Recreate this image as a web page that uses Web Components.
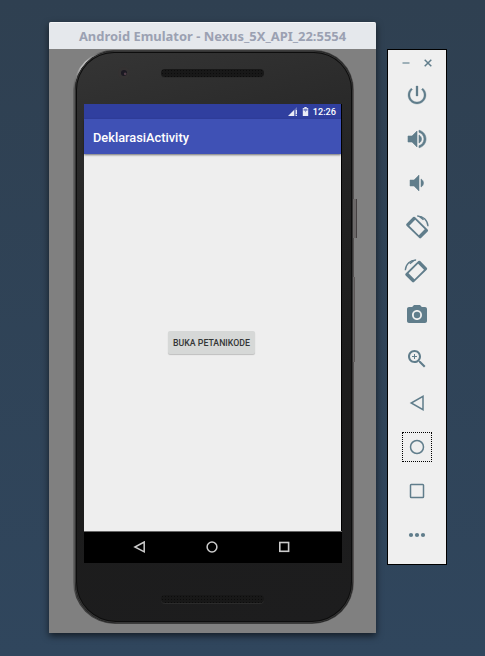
<!DOCTYPE html>
<html lang="id"><head><meta charset="utf-8"><title>Android Emulator</title>
<style>
html,body{margin:0;height:100%}
body{width:485px;height:656px;overflow:hidden;background:linear-gradient(#2f4051,#30465d);display:flex;align-items:flex-start;gap:11px;padding:22px 0 0 49px;box-sizing:border-box}
tool-panel{margin-top:27px}
</style></head><body>
<emulator-window heading="Android Emulator - Nexus_5X_API_22:5554">
  <phone-frame>
    <android-screen heading="DeklarasiActivity" time="12:26"><android-button>BUKA PETANIKODE</android-button></android-screen>
  </phone-frame>
</emulator-window>
<tool-panel></tool-panel>
<script>
const define=(name,markup,setup)=>customElements.define(name,class extends HTMLElement{
  connectedCallback(){
    if(this.shadowRoot)return;
    const t=document.createElement('template');t.innerHTML=markup;
    this.attachShadow({mode:'open'}).append(t.content.cloneNode(true));
    if(setup)setup(this,this.shadowRoot);
  }});

const fill=(d,w=0)=>`<path d="${d}" stroke="currentColor" stroke-width="${w}"/>`;
const rotate=`<g transform="translate(12.1 12.6) rotate(44.5)"><path fill-rule="evenodd" d="M-8.9-6H8.9Q10.2-6 10.2-4.7V4.7Q10.2 6 8.9 6H-8.9Q-10.2 6-10.2 4.7V-4.7Q-10.2-6-8.9-6ZM-6.8-4.2V4.2H6.6V-4.2Z"/></g><path d="M12.2 1.1C18 .7 22.6 5.2 23 11.2" fill="none" stroke="currentColor" stroke-width="1.3"/><path d="M12 .6L16 1.2L19 4.6L18 5.2Z"/>`;
const ICONS={
 power:fill('M13 3h-2v10h2V3zm4.83 2.17l-1.42 1.42C17.99 7.86 19 9.81 19 12c0 3.87-3.13 7-7 7s-7-3.13-7-7c0-2.19 1.01-4.14 2.58-5.42L6.17 5.17C4.23 6.82 3 9.26 3 12c0 4.97 4.03 9 9 9s9-4.03 9-9c0-2.74-1.23-5.18-3.17-6.83z',.3),
 louder:fill('M3 9v6h4l5 5V4L7 9H3zm13.5 3c0-1.77-1.02-3.29-2.5-4.03v8.05c1.48-.73 2.5-2.25 2.5-4.02zM14 3.23v2.06c2.89.86 5 3.54 5 6.71s-2.11 5.85-5 6.71v2.06c4.01-.91 7-4.49 7-8.77s-2.99-7.86-7-8.77z',.6),
 quieter:fill('M18.5 12c0-1.77-1.02-3.29-2.5-4.03v8.05c1.48-.73 2.5-2.25 2.5-4.02zM5 9v6h4l5 5V4L9 9H5z',.5),
 rotateLeft:rotate,
 rotateRight:`<g transform="matrix(-1 0 0 1 23.3 0)">${rotate}</g>`,
 camera:'<circle cx="12" cy="12" r="3.2"/>'+fill('M9 2L7.17 4H4c-1.1 0-2 .9-2 2v12c0 1.1.9 2 2 2h16c1.1 0 2-.9 2-2V6c0-1.1-.9-2-2-2h-3.17L15 2H9zm3 15c-2.76 0-5-2.24-5-5s2.24-5 5-5 5 2.24 5 5-2.24 5-5 5z'),
 zoom:fill('M15.5 14h-.79l-.28-.27C15.41 12.59 16 11.11 16 9.5 16 5.91 13.09 3 9.5 3S3 5.91 3 9.5 5.91 16 9.5 16c1.61 0 3.09-.59 4.23-1.57l.27.28v.79l5 4.99L20.49 19l-4.99-5zm-6 0C7.01 14 5 11.99 5 9.5S7.01 5 9.5 5 14 7.01 14 9.5 11.99 14 9.5 14z')+'<path d="M12 10h-2v2H9v-2H7V9h2V7h1v2h2v1z"/>',
 back:'<path d="M18 5.4V18.6L6.2 12Z" fill="none" stroke="currentColor" stroke-width="1.5"/>',
 home:'<circle cx="12" cy="12" r="6.5" fill="none" stroke="currentColor" stroke-width="1.5"/>',
 recent:'<rect x="5.5" y="5.5" width="13" height="13" rx=".8" fill="none" stroke="currentColor" stroke-width="1.5"/>',
 more:'<circle cx="6" cy="12" r="2.1"/><circle cx="12" cy="12" r="2.1"/><circle cx="18" cy="12" r="2.1"/>'
};

define('speaker-grille',`<style>:host{display:block;width:103px;height:8px;border-radius:4px;background:radial-gradient(circle,#0c0c0c .8px,transparent 1px) 0 0/3px 3px,#181818;box-shadow:0 1px 0 #2b2b2b}</style>`);

define('android-button',`<style>:host{display:flex;align-items:center;justify-content:center;width:87px;height:23px;padding-top:1px;box-sizing:border-box;border-radius:2px;background:#d6d8d7;box-shadow:0 1px 1px #0003;color:#343636;font:500 8.75px Roboto,sans-serif;white-space:nowrap}</style><slot></slot>`);

define('android-screen',`<style>
:host{display:flex;flex-direction:column;width:257px;height:459px;background:#eee;font-family:Roboto,sans-serif;border-right:1px solid #000}
.status{height:15px;background:#303f9f;color:#fff;display:flex;align-items:center;justify-content:flex-end;gap:4px;padding-right:5px;font:500 9.2px Roboto,sans-serif}
.bar{height:35px;box-sizing:border-box;background:#3f51b5;color:#fff;display:flex;align-items:center;padding:1px 0 0 9px;font:500 12.8px Roboto,sans-serif;box-shadow:0 1px 2px #0008}
main{flex:1;display:flex;align-items:center;justify-content:center;padding:0 2px 0 0}
nav{height:32px;background:#000;display:flex;align-items:center;justify-content:space-between;padding:0 51px 0 49px;margin-right:-1px;color:#ccc;border-top:1px solid #666;box-sizing:border-box}
svg{display:block}
</style>
<div class="status"><svg width="10" height="9" viewBox="0 0 10 9"><path d="M0 9L6 3V9Z" fill="#fff" opacity=".9"/><path d="M6 3L9 0V9H6Z" fill="#fff" opacity=".3"/><path d="M7.8 3h1v4h-1zm0 5h1v1h-1z" fill="#fff"/></svg>
<svg width="7" height="9" viewBox="0 0 7 10"><path d="M2.2 0h2.6v1H6.5v9H.5V1h1.7z" fill="#fff" opacity=".9"/><path d="M1.3 2h4.4v2.3H4.3L3 6V4.3H1.3z" fill="#7984c4"/></svg><span id="time"></span></div>
<div class="bar" id="heading"></div><main><slot></slot></main>
<nav><svg width="14" height="14" viewBox="0 0 14 14" fill="none" stroke="currentColor" stroke-width="1.5"><path d="M11.2 1V10.8L1.9 6Z"/></svg><svg width="14" height="14" viewBox="0 0 14 14" fill="none" stroke="currentColor" stroke-width="1.5"><circle cx="7" cy="6" r="4.9"/></svg><svg width="14" height="14" viewBox="0 0 14 14" fill="none" stroke="currentColor" stroke-width="1.6"><rect x="2.8" y="1.5" width="8.8" height="8.8"/></svg></nav>`,
(el,r)=>{for(const k of['time','heading'])r.getElementById(k).textContent=el.getAttribute(k)});

define('phone-frame',`<style>
:host{display:block;position:relative;width:281px;height:574px}
.rim,.body{box-sizing:border-box}
.rim{width:281px;height:574px;border-radius:40px 40px 42px 42px;padding:1px 1px 1px 2px;background:radial-gradient(circle at 10px 14px,#bbb 0 4px,#bbb0 26px),linear-gradient(90deg,#6c6c6c,#3c3c3c 3px,#3c3c3c 276px,#565252)}
.body{width:278px;height:572px;border-radius:39px 39px 41px 41px;background:linear-gradient(165deg,#353535,#232323 30%,#1c1c1c 60%,#1d1d1e);box-shadow:inset 0 0 0 1px #353535,inset 0 0 0 2px #0d0d0d;display:flex;flex-direction:column;padding-left:9px}
.top{height:53px;display:flex;align-items:flex-start;padding:16px 0 0 34px;box-sizing:border-box}
.cam{width:12px;height:12px;box-sizing:border-box;border-radius:50%;border:3px solid #343232;background:radial-gradient(circle at 70% 65%,#503d48 0 .8px,#1b1922 1.8px);margin-right:31px}
.top speaker-grille{margin-top:2px}
.bottom{height:60px;padding:32px 0 0 77px;box-sizing:border-box}
.key{position:absolute;box-sizing:border-box;background:#6b6868;border-right:1px solid #454142}
</style><div class="key" style="left:280px;top:149px;width:4px;height:39px"></div><div class="key" style="left:280px;top:227px;width:2px;height:85px;border-color:#5c5858"></div>
<div class="rim"><div class="body"><div class="top"><div class="cam"></div><speaker-grille></speaker-grille></div><slot></slot><div class="bottom"><speaker-grille></speaker-grille></div></div></div>`);

define('emulator-window',`<style>
:host{display:block;width:327px;height:611px;background:#808080;border-radius:2px 2px 0 0;box-shadow:0 3px 7px #0009}
header{height:27px;padding-bottom:1px;box-sizing:border-box;background:#e5e8ec;border-top:1px solid #f5f6f7;border-radius:2px 2px 0 0;color:#9ba1b2;display:flex;align-items:center;justify-content:center;font:bold 12.95px "Noto Sans",sans-serif;white-space:nowrap}
.view{padding:1px 0 0 24px}
</style><header></header><div class="view"><slot></slot></div>`,(el,r)=>{r.querySelector('header').textContent=el.getAttribute('heading')});

define('tool-button',`<style>
:host{display:flex;align-items:center;justify-content:center;height:44px;color:#607d8b}
span{display:flex;align-items:center;justify-content:center;width:30px;height:30px;box-sizing:border-box}
:host([focused]) span{border:1px dotted #000}
svg{display:block;overflow:visible}
</style><span><svg width="24" height="24" viewBox="0 0 24 24" fill="currentColor"></svg></span>`,(el,r)=>{r.querySelector('svg').innerHTML=ICONS[el.getAttribute('icon')]});

define('tool-panel',`<style>
:host{display:block;box-sizing:border-box;width:60px;height:516px;border:1px solid #000;background:#efefef}
header{height:23px;display:flex;align-items:center;gap:14px;padding:3px 0 0 14px;box-sizing:border-box}
svg{display:block}
</style><header><svg width="8" height="8" viewBox="0 0 8 8"><path d="M.5 4H7.5" stroke="#8aa0aa" stroke-width="1.6"/></svg><svg width="8" height="8" viewBox="0 0 8 8"><path d="M.7.7L7.3 7.3M7.3.7L.7 7.3" stroke="#607d8b" stroke-width="1.5"/></svg></header>
${Object.keys(ICONS).map(k=>`<tool-button icon="${k}"${k==='home'?' focused':''}></tool-button>`).join('')}`);
</script>
</body></html>
